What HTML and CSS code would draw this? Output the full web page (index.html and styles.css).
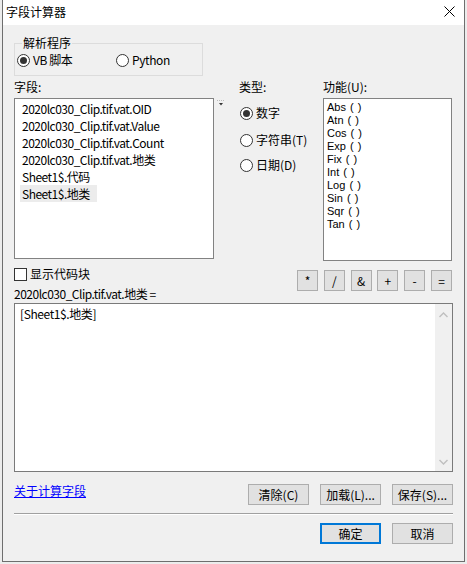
FILE: index.html
```html
<!DOCTYPE html>
<html lang="zh-CN">
<head>
<meta charset="utf-8">
<title>字段计算器</title>
<link rel="stylesheet" href="styles.css">
</head>
<body>
<div class="dialog">
  <div class="titlebar">
    <span class="title">字段计算器</span>
    <svg class="close" width="11" height="11" viewBox="0 0 11 11"><path d="M0.5 0.5L10.5 10.5M10.5 0.5L0.5 10.5" stroke="#000" stroke-width="1" fill="none"/></svg>
  </div>
  <div class="content">
    <fieldset class="parser">
      <legend>解析程序</legend>
      <div class="parser-row">
        <span class="radio vb"><span class="dot checked"></span><span class="narrow">VB 脚本</span></span>
        <span class="radio"><span class="dot"></span><span class="narrow">Python</span></span>
      </div>
    </fieldset>

    <div class="columns">
      <div class="col">
        <div class="label">字段:</div>
        <ul class="fieldlist">
          <li><span>2020lc030_Clip.tif.vat.OID</span></li>
          <li><span>2020lc030_Clip.tif.vat.Value</span></li>
          <li><span>2020lc030_Clip.tif.vat.Count</span></li>
          <li><span>2020lc030_Clip.tif.vat.地类</span></li>
          <li><span>Sheet1$.代码</span></li>
          <li><span class="hl">Sheet1$.地类</span></li>
        </ul>
      </div>
      <div class="col marker-col">
        <svg class="marker" width="7" height="6" viewBox="0 0 7 6"><path d="M0 0.5H7" stroke="#bbb" stroke-dasharray="1 1"/><path d="M2 3H6L4 5.5Z" fill="#333"/></svg>
      </div>
      <div class="col">
        <div class="label">类型:</div>
        <div class="types">
          <span class="radio t1"><span class="dot checked"></span><span>数字</span></span>
          <span class="radio t2"><span class="dot"></span><span>字符串(T)</span></span>
          <span class="radio t3"><span class="dot"></span><span>日期(D)</span></span>
        </div>
      </div>
      <div class="col">
        <div class="label">功能(U):</div>
        <ul class="funclist">
          <li>Abs ( )</li>
          <li>Atn ( )</li>
          <li>Cos ( )</li>
          <li>Exp ( )</li>
          <li>Fix ( )</li>
          <li>Int ( )</li>
          <li>Log ( )</li>
          <li>Sin ( )</li>
          <li>Sqr ( )</li>
          <li>Tan ( )</li>
        </ul>
      </div>
    </div>

    <div class="midrow">
      <div class="midleft">
        <div class="check"><span class="box"></span><span>显示代码块</span></div>
        <div class="exprlabel">2020lc030_Clip.tif.vat.地类 =</div>
      </div>
      <div class="ops">
        <span class="btn op">*</span>
        <span class="btn op">/</span>
        <span class="btn op">&amp;</span>
        <span class="btn op">+</span>
        <span class="btn op">-</span>
        <span class="btn op">=</span>
      </div>
    </div>

    <div class="expr">
      <div class="exprtext">[Sheet1$.地类]</div>
      <div class="scrollbar">
        <svg width="9" height="6" viewBox="0 0 9 6"><path d="M0.5 5L4.5 1L8.5 5" stroke="#bfbfbf" stroke-width="1.4" fill="none"/></svg>
        <svg width="9" height="6" viewBox="0 0 9 6"><path d="M0.5 1L4.5 5L8.5 1" stroke="#bfbfbf" stroke-width="1.4" fill="none"/></svg>
      </div>
    </div>

    <div class="actions">
      <a class="link" href="#">关于计算字段</a>
      <div class="btngroup">
        <span class="btn wide">清除(C)</span>
        <span class="btn wide">加载(L)...</span>
        <span class="btn wide">保存(S)...</span>
      </div>
    </div>

    <div class="sep"></div>

    <div class="footer">
      <span class="btn wide default">确定</span>
      <span class="btn wide">取消</span>
    </div>
  </div>
</div>
</body>
</html>
```

FILE: styles.css
```css
html, body {
  margin: 0;
  padding: 0;
}
body {
  width: 467px;
  height: 564px;
  background: #ececec;
  font-family: "Noto Sans CJK SC", "Liberation Sans", sans-serif;
  font-size: 12px;
  color: #000;
  overflow: hidden;
}
.dialog {
  margin-left: 2px;
  width: 463px;
  height: 562px;
  box-sizing: border-box;
  border: 1px solid #6e6e6e;
  border-top: none;
  background: #f0f0f0;
  display: flex;
  flex-direction: column;
}
.titlebar {
  height: 25px;
  background: #fff;
  display: flex;
  align-items: center;
  justify-content: space-between;
  padding: 0 9px 0 3px;
  flex-shrink: 0;
}
.title {
  line-height: 16px;
  margin-top: -1px;
}
.close {
  display: block;
  margin-top: -2px;
}
.content {
  padding: 11px 11px 0 11px;
  display: flex;
  flex-direction: column;
}
.parser {
  margin: 0;
  width: 189px;
  box-sizing: border-box;
  border: 1px solid #dcdcdc;
  padding: 2px 2px 7px 2px;
  min-width: 0;
}
.parser legend {
  line-height: 14px;
  padding: 0 1px;
  margin-left: 5px;
}
.parser-row {
  display: flex;
  line-height: 16px;
}
.narrow {
  letter-spacing: -0.4px;
}
.radio {
  display: flex;
  align-items: center;
  line-height: 16px;
  white-space: nowrap;
}
.radio.vb {
  width: 99px;
}
.dot {
  width: 13px;
  height: 13px;
  box-sizing: border-box;
  border: 1px solid #333;
  border-radius: 50%;
  background: #fff;
  margin-right: 3px;
  display: flex;
  align-items: center;
  justify-content: center;
  flex-shrink: 0;
}
.dot.checked::after {
  content: "";
  width: 7px;
  height: 7px;
  border-radius: 50%;
  background: #333;
}
.columns {
  display: grid;
  grid-template-columns: 200px 25px 84px 129px;
  margin-top: 3px;
}
.label {
  line-height: 16px;
  height: 16px;
}
.fieldlist, .funclist {
  list-style: none;
  margin: 3px 0 0 0;
  box-sizing: border-box;
  border: 1px solid #828282;
  background: #fff;
}
.fieldlist {
  height: 161px;
  padding: 1px 0 0 5px;
  letter-spacing: -0.5px;
}
.fieldlist li {
  height: 17px;
  line-height: 17px;
}
.fieldlist li span {
  display: inline-block;
  padding: 0 7px 0 2px;
}
.fieldlist li span.hl {
  background: #ececec;
}
.marker-col {
  padding-top: 21px;
  padding-left: 3px;
}
.marker {
  display: block;
}
.types {
  display: flex;
  flex-direction: column;
  padding-left: 1px;
}
.types .t1 { margin-top: 10px; }
.types .t2 { margin-top: 11px; }
.types .t3 { margin-top: 9px; }
.funclist {
  height: 163px;
  padding: 2px 0 0 3px;
  font-family: "Liberation Sans", "Noto Sans CJK SC", sans-serif;
  font-size: 11px;
}
.funclist li {
  height: 13px;
  line-height: 13px;
  word-spacing: 1px;
}
.midrow {
  display: flex;
  justify-content: space-between;
  margin-top: 5px;
}
.check {
  display: flex;
  align-items: center;
  line-height: 16px;
}
.box {
  width: 13px;
  height: 13px;
  box-sizing: border-box;
  border: 1px solid #333;
  background: #fff;
  margin-right: 3px;
}
.exprlabel {
  margin-top: 4px;
  line-height: 16px;
  letter-spacing: -0.5px;
}
.ops {
  display: flex;
  justify-content: space-between;
  width: 155px;
  margin-top: 4px;
  margin-right: 1px;
  align-self: flex-start;
}
.btn {
  display: flex;
  align-items: center;
  justify-content: center;
  box-sizing: border-box;
  background: #e1e1e1;
  border: 1px solid #adadad;
  height: 21px;
  line-height: 16px;
  white-space: nowrap;
}
.btn.op {
  width: 21px;
}
.btn.wide {
  width: 61px;
}
.btn.default {
  border: 2px solid #0078d7;
}
.expr {
  margin-top: 1px;
  height: 169px;
  box-sizing: border-box;
  border: 1px solid #7a7a7a;
  background: #fff;
  display: flex;
}
.exprtext {
  flex: 1;
  padding: 2px 0 0 5px;
  line-height: 16px;
  letter-spacing: -0.4px;
}
.scrollbar {
  width: 17px;
  background: #f0f0f0;
  display: flex;
  flex-direction: column;
  justify-content: space-between;
  align-items: center;
  padding: 8px 0 6px 0;
}
.scrollbar svg {
  display: block;
}
.actions {
  display: flex;
  justify-content: space-between;
  align-items: flex-start;
  margin-top: 12px;
}
.link {
  color: #0000ff;
  text-decoration: underline;
  line-height: 13px;
}
.btngroup {
  display: flex;
  gap: 11px;
}
.sep {
  margin-top: 8px;
  height: 0;
  border-top: 1px solid #a0a0a0;
  border-bottom: 1px solid #ffffff;
}
.footer {
  display: flex;
  justify-content: flex-end;
  gap: 11px;
  margin-top: 8px;
}
```
